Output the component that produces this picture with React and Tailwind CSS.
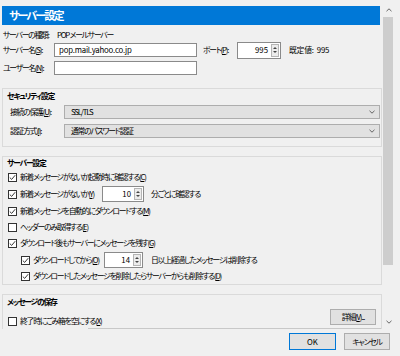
import React from "react";

const FONT =
  "font-['Meiryo_UI','Noto_Sans_CJK_JP','Liberation_Sans',sans-serif] [font-feature-settings:'palt']";

function Key({ k }) {
  return (
    <>
      (<u>{k}</u>)
    </>
  );
}

function Check({ checked }) {
  return (
    <span className="w-[9px] h-[9px] border border-[#333] bg-white flex items-center justify-center shrink-0">
      {checked && (
        <svg width="7" height="7" viewBox="0 0 7 7">
          <path d="M0.8 3.6 L2.7 5.4 L6.2 1.2" fill="none" stroke="#222" strokeWidth="0.9" />
        </svg>
      )}
    </span>
  );
}

function Spin({ value, width }) {
  return (
    <div className={`flex h-[16px] shrink-0 border border-[#8a8a8a] bg-white tracking-normal ${width}`}>
      <div className="flex-1 flex items-center justify-end pr-[3px]">{value}</div>
      <div className="w-[8px] my-[1px] mr-[1px] border border-[#b5b5b5] bg-[#ececec] flex flex-col items-center justify-center gap-[2px]">
        <span className="w-0 h-0 border-l-[2px] border-r-[2px] border-b-[2px] border-l-transparent border-r-transparent border-b-[#444]" />
        <span className="w-0 h-0 border-l-[2px] border-r-[2px] border-t-[2px] border-l-transparent border-r-transparent border-t-[#444]" />
      </div>
    </div>
  );
}

function Select({ value }) {
  return (
    <div className="flex-1 h-[14px] border border-[#adadad] bg-[#e1e1e1] flex items-center justify-between pl-[6px] pr-[4px]">
      <span>{value}</span>
      <svg width="6" height="4" viewBox="0 0 6 4">
        <path d="M0.5 0.8 L3 3.2 L5.5 0.8" fill="none" stroke="#555" strokeWidth="0.9" />
      </svg>
    </div>
  );
}

function Row({ indent, checked, children, className = "" }) {
  return (
    <div className={`flex items-center h-[16px] ${indent ? "pl-[18px]" : "pl-[5px]"} ${className}`}>
      <Check checked={checked} />
      <span className="ml-[3px] whitespace-nowrap">{children}</span>
    </div>
  );
}

export default function App() {
  return (
    <div className={`w-[400px] h-[356px] bg-[#f0f0f0] text-black text-[7.8px] tracking-[-1.2px] leading-none overflow-hidden flex flex-col ${FONT}`}>
      <div className="flex h-[329px]">
        {/* ===== scroll content ===== */}
        <div className="w-[382px] pl-[2px] overflow-hidden">
          <div className="mt-[6px] mr-[2px] h-[19px] bg-[#0078d7] text-white font-bold text-[11px] tracking-[-1.8px] flex items-center pl-[7px]">
            サーバー設定
          </div>

          <div className="mt-[3px] h-[14px] flex items-center whitespace-nowrap">
            <span className="w-[55px] shrink-0 pl-[1px]">サーバーの種類:</span>
            <span>POP&nbsp;メールサーバー</span>
          </div>

          <div className="mt-[1px] h-[14px] flex items-center whitespace-nowrap">
            <span className="w-[52px] shrink-0 pl-[1px]">
              サーバー名<Key k="S" />:
            </span>
            <div className="w-[143px] shrink-0 h-[14px] border border-[#8a8a8a] bg-white flex items-center pl-[4px] tracking-[-0.2px]">
              pop.mail.yahoo.co.jp
            </div>
            <span className="ml-[6px] w-[34px] shrink-0">
              ポート<Key k="P" />:
            </span>
            <Spin value="995" width="w-[44px] h-[17px]" />
            <span className="ml-[8px] tracking-[-0.2px]">既定値:&nbsp;&nbsp;995</span>
          </div>

          <div className="mt-[4px] h-[14px] flex items-center whitespace-nowrap">
            <span className="w-[52px] shrink-0 pl-[1px]">
              ユーザー名<Key k="N" />:
            </span>
            <div className="w-[143px] shrink-0 h-[14px] border border-[#8a8a8a] bg-white" />
          </div>

          {/* ===== セキュリティ設定 ===== */}
          <div className="mt-[13px] border border-[#dadada] pb-[8px]">
            <div className="h-[14px] flex items-center pl-[4px] font-semibold">セキュリティ設定</div>
            <div className="mt-[2px] h-[14px] flex items-center pr-[1px]">
              <span className="w-[61px] shrink-0 pl-[7px] whitespace-nowrap">
                接続の保護<Key k="U" />:
              </span>
              <Select value="SSL/TLS" />
            </div>
            <div className="mt-[5px] h-[14px] flex items-center pr-[1px]">
              <span className="w-[61px] shrink-0 pl-[7px] whitespace-nowrap">
                認証方式<Key k="I" />:
              </span>
              <Select value="通常のパスワード認証" />
            </div>
          </div>

          {/* ===== サーバー設定 ===== */}
          <div className="mt-[9px] border border-[#dadada]">
            <div className="h-[12px] flex items-center pl-[4px] font-semibold">サーバー設定</div>
            <Row checked>
              新着メッセージがないか起動時に確認する<Key k="C" />
            </Row>
            <div className="mt-[1px] flex items-center h-[16px] pl-[5px] whitespace-nowrap">
              <Check checked />
              <span className="ml-[3px] w-[82px] shrink-0">
                新着メッセージがないか<Key k="Y" />
              </span>
              <Spin value="10" width="w-[42px]" />
              <span className="ml-[7px]">分ごとに確認する</span>
            </div>
            <Row checked className="mt-[1px]">
              新着メッセージを自動的にダウンロードする<Key k="M" />
            </Row>
            <Row>
              ヘッダーのみ取得する<Key k="E" />
            </Row>
            <Row checked>
              ダウンロード後もサーバーにメッセージを残す<Key k="G" />
            </Row>
            <div className="mt-[1px] flex items-center h-[16px] pl-[18px] whitespace-nowrap">
              <Check checked />
              <span className="ml-[3px] w-[71px] shrink-0">
                ダウンロードしてから<Key k="O" />
              </span>
              <Spin value="14" width="w-[39px]" />
              <span className="ml-[8px]">日以上経過したメッセージは削除する</span>
            </div>
            <Row indent checked className="h-[14px]">
              ダウンロードしたメッセージを削除したらサーバーからも削除する<Key k="D" />
            </Row>
          </div>

          {/* ===== メッセージの保存 ===== */}
          <div className="mt-[9px] border-t border-l border-r border-[#dadada]">
            <div className="h-[13px] flex items-center pl-[4px] font-semibold">メッセージの保存</div>
            <div className="h-[20px] flex justify-between">
              <div className="self-end flex items-center h-[14px] pl-[5px] whitespace-nowrap">
                <Check />
                <span className="ml-[3px]">
                  終了時にごみ箱を空にする<Key k="X" />
                </span>
              </div>
              <div className="mt-[1px] mr-[5px] w-[46px] h-[16px] border border-[#adadad] bg-[#e1e1e1] flex items-center justify-center">
                詳細<Key k="V" />...
              </div>
            </div>
            <div className="ml-[85px] h-[1px] bg-[#c8c8c8]" />
          </div>
        </div>

        {/* ===== scrollbar ===== */}
        <div className="w-[14px] mt-[3px] flex flex-col items-center">
          <div className="h-[14px] flex items-center justify-center">
            <svg width="6" height="4" viewBox="0 0 6 4">
              <path d="M0.5 3.2 L3 0.8 L5.5 3.2" fill="none" stroke="#555" strokeWidth="0.9" />
            </svg>
          </div>
          <div className="w-[10px] h-[248px] bg-[#cdcdcd] self-start ml-[1px]" />
          <div className="flex-1" />
          <div className="h-[14px] flex items-center justify-center">
            <svg width="6" height="4" viewBox="0 0 6 4">
              <path d="M0.5 0.8 L3 3.2 L5.5 0.8" fill="none" stroke="#555" strokeWidth="0.9" />
            </svg>
          </div>
        </div>
      </div>

      {/* ===== buttons ===== */}
      <div className="mt-[4px] flex justify-end gap-[8px] pr-[10px]">
        <div className="w-[47px] h-[17px] border border-[#0078d7] bg-[#e1e1e1] flex items-center justify-center tracking-normal">OK</div>
        <div className="w-[46px] h-[17px] border border-[#adadad] bg-[#e1e1e1] flex items-center justify-center">キャンセル</div>
      </div>
    </div>
  );
}
